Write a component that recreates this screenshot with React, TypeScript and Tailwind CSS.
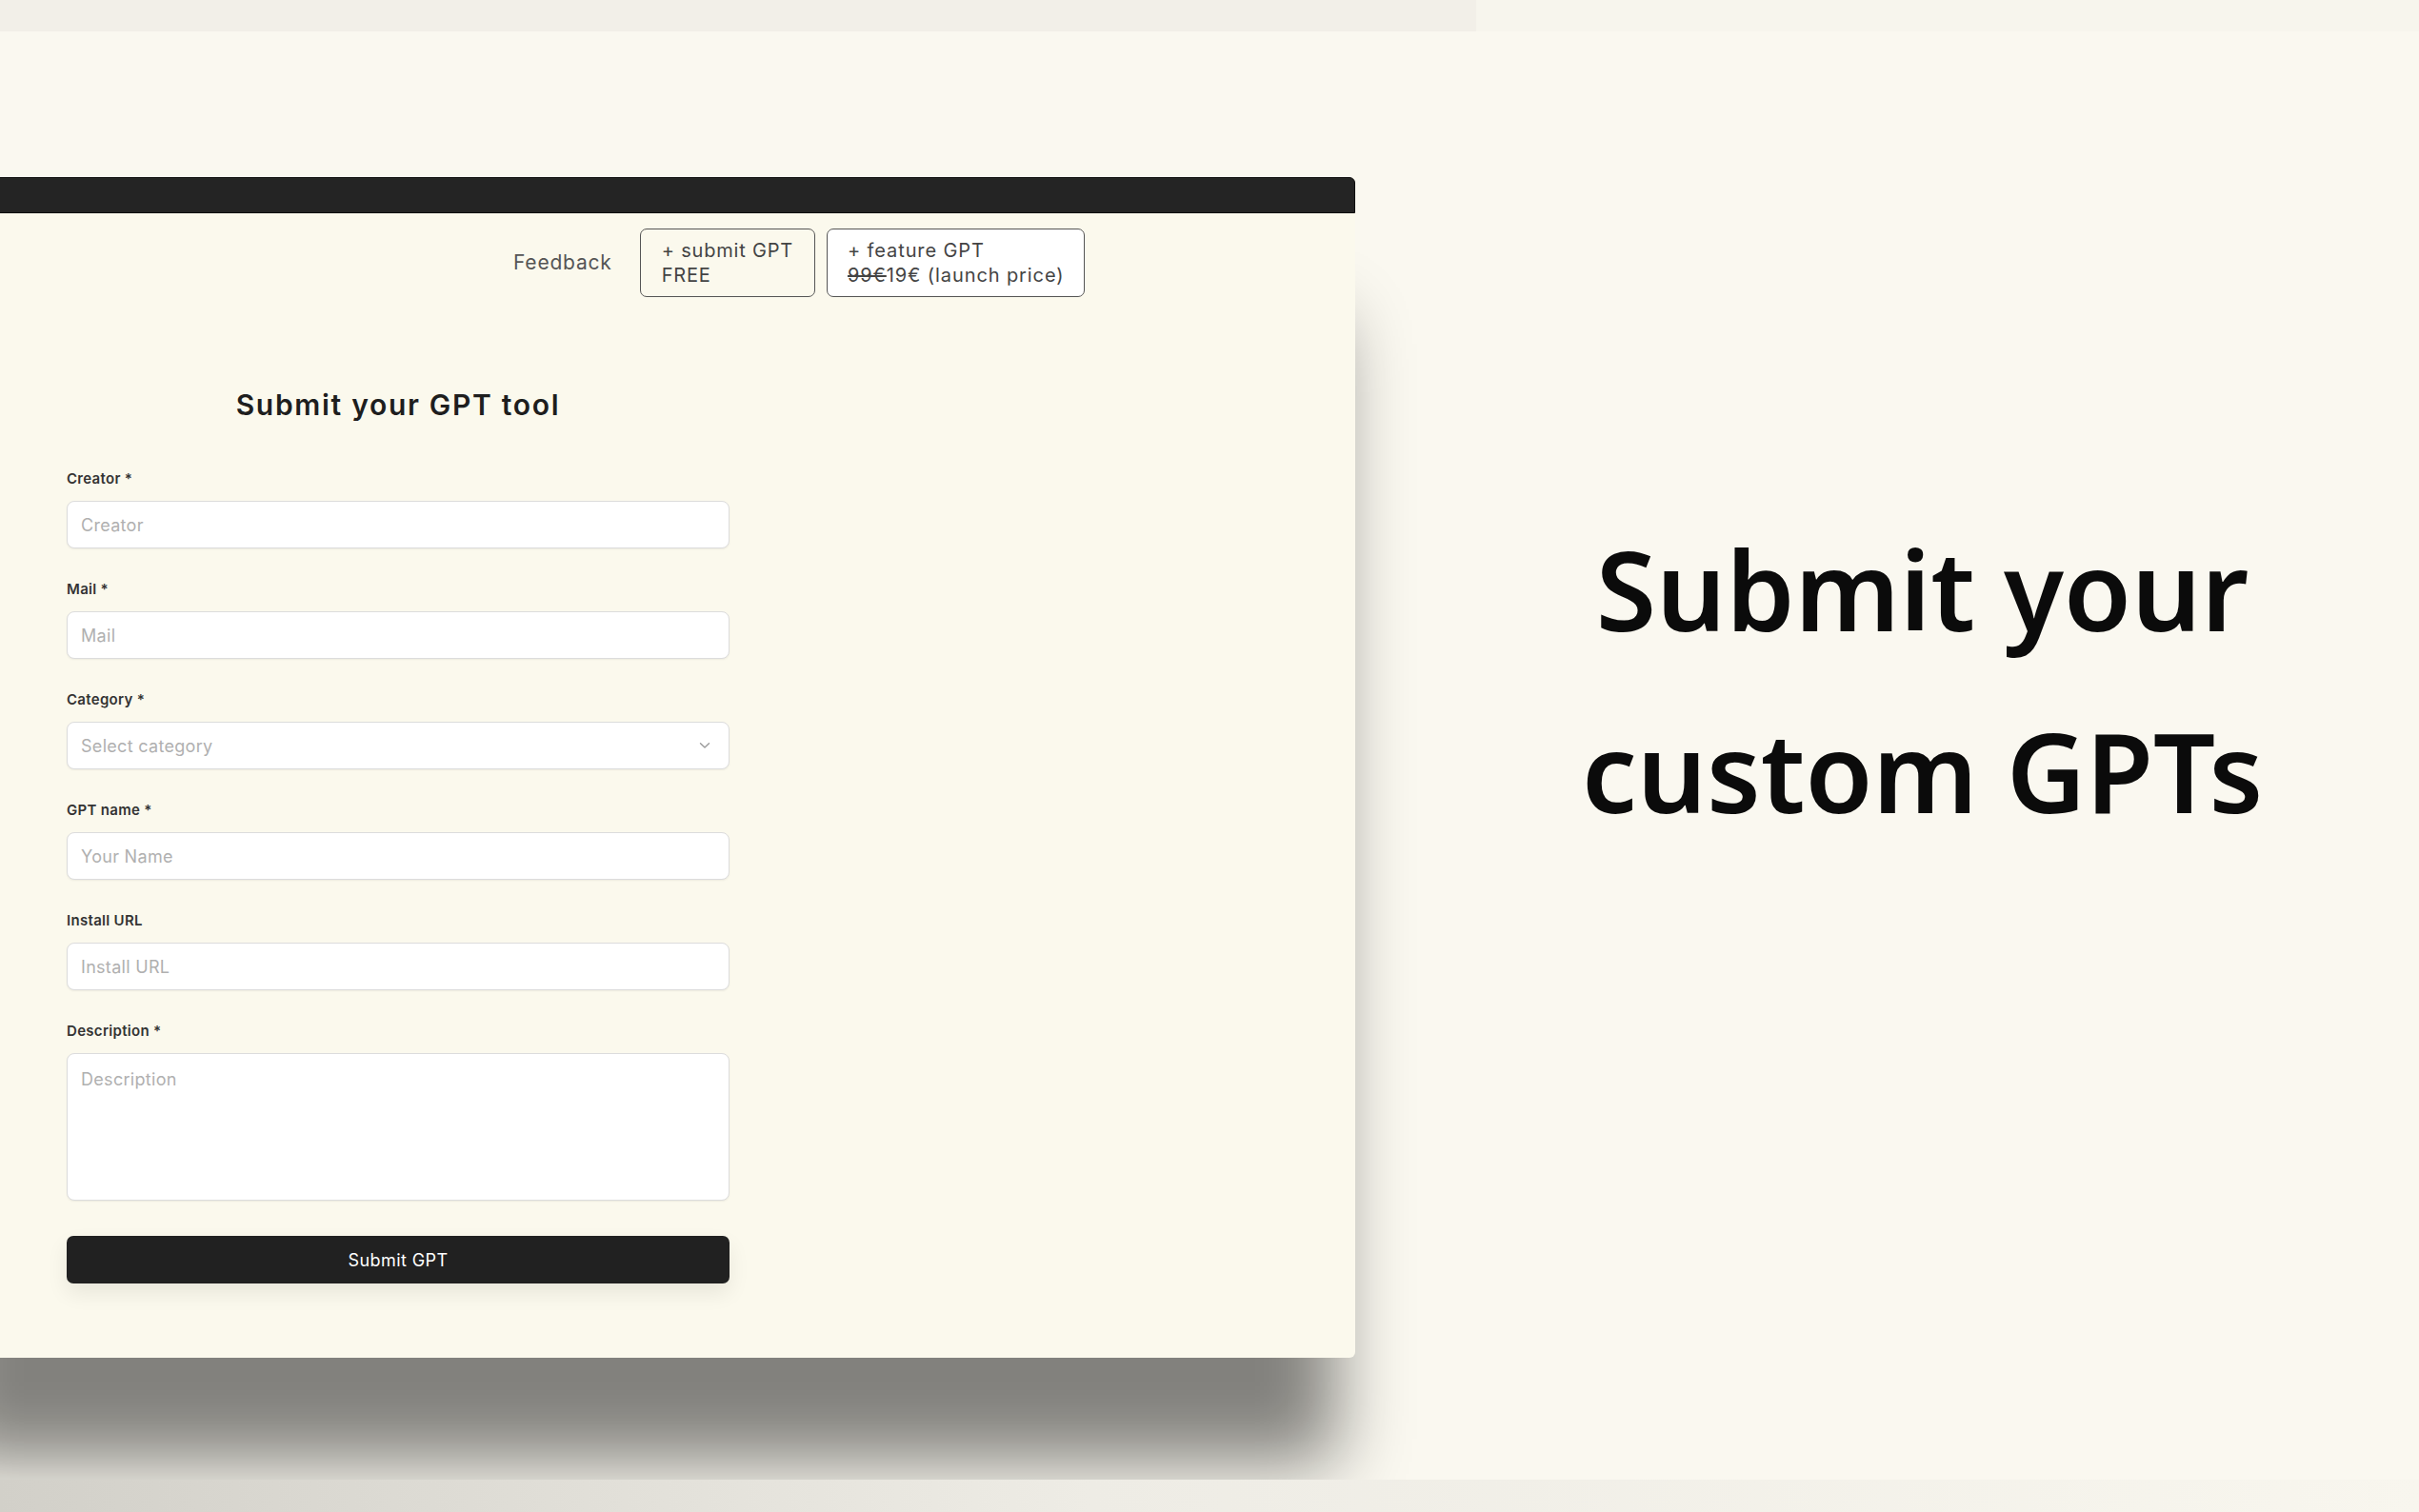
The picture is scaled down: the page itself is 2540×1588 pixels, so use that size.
import React from "react";

function Field({ label, children }: { label: string; children: React.ReactNode }) {
  return (
    <div className="flex flex-col">
      <label className="h-[20px] text-[15px] font-semibold leading-[20px] tracking-[0.3px] text-[#333333]">
        {label}
      </label>
      <div className="mt-[13px]">{children}</div>
    </div>
  );
}

const inputCls =
  "block h-[50px] w-full rounded-[8px] border border-[#dcdcdc] bg-white px-[14px] text-[18px] tracking-[0.3px] text-[#333] shadow-[0_1px_2px_rgba(0,0,0,0.06)] outline-none placeholder:text-[#b0b0b0]";

export default function App() {
  return (
    <div className="flex h-[1588px] w-[2540px] flex-col overflow-hidden bg-[#faf8f0] font-[Inter,'Liberation_Sans',sans-serif]">
      {/* top strip */}
      <div className="flex h-[33px] shrink-0">
        <div className="w-[1550px] bg-[#f2efe8]" />
        <div className="flex-1 bg-[#f7f5ed]" />
      </div>

      {/* middle */}
      <div className="flex h-[1521px] shrink-0 overflow-hidden">
        {/* browser window (extends past the left edge of the screen) */}
        <div className="-ml-[80px] mt-[153px] flex h-[1240px] w-[1503px] shrink-0 flex-col rounded-r-[6px] bg-[#fbf9ed] shadow-[0_130px_70px_-20px_rgba(0,0,0,0.48)]">
          <div className="h-[38px] shrink-0 rounded-tr-[6px] border border-[#0e0e0e] bg-[#242424]" />
          <div className="flex flex-col pl-[80px]">
            {/* nav */}
            <div className="flex items-center pl-[539px] pt-[16px]">
              <span className="mr-[29px] text-[21px] tracking-[0.8px] text-[#555555]">Feedback</span>
              <button className="mr-[12px] flex flex-col items-start rounded-[7px] border border-[#555555] px-[22px] py-[9px] text-left text-[20px] leading-[26px] tracking-[0.8px] text-[#444444]">
                <span>+ submit GPT</span>
                <span>FREE</span>
              </button>
              <button className="flex flex-col items-start rounded-[7px] border border-[#555555] bg-white px-[21px] py-[9px] text-left text-[20px] leading-[26px] tracking-[0.9px] text-[#444444]">
                <span>+ feature GPT</span>
                <span>
                  <span className="line-through">99€</span>19€ (launch price)
                </span>
              </button>
            </div>

            {/* form */}
            <div className="ml-[70px] flex w-[696px] flex-col">
              <h1 className="mt-[95px] text-center text-[30px] font-semibold leading-[36px] tracking-[1.7px] text-[#1e1e1e]">
                Submit your GPT tool
              </h1>
              <div className="mt-[50px] flex flex-col gap-[33px]">
                <Field label="Creator *">
                  <input className={inputCls} placeholder="Creator" />
                </Field>
                <Field label="Mail *">
                  <input className={inputCls} placeholder="Mail" />
                </Field>
                <Field label="Category *">
                  <div className="flex h-[50px] w-full items-center justify-between rounded-[8px] border border-[#dcdcdc] bg-white pl-[14px] pr-[19px] text-[18px] tracking-[0.3px] text-[#b0b0b0] shadow-[0_1px_2px_rgba(0,0,0,0.06)]">
                    <span>Select category</span>
                    <svg width="12" height="8" viewBox="0 0 12 8" fill="none">
                      <path d="M1.5 1.8 L6 6 L10.5 1.8" stroke="#9a9a9a" strokeWidth="1.4" strokeLinecap="round" strokeLinejoin="round" />
                    </svg>
                  </div>
                </Field>
                <Field label="GPT name *">
                  <input className={inputCls} placeholder="Your Name" />
                </Field>
                <Field label="Install URL">
                  <input className={inputCls} placeholder="Install URL" />
                </Field>
                <Field label="Description *">
                  <textarea
                    className="block h-[155px] w-full resize-none rounded-[8px] border border-[#dcdcdc] bg-white px-[14px] pt-[14px] text-[18px] leading-[26px] tracking-[0.3px] text-[#333] shadow-[0_1px_2px_rgba(0,0,0,0.06)] outline-none placeholder:text-[#b0b0b0]"
                    placeholder="Description"
                  />
                </Field>
              </div>
              <button className="mt-[37px] h-[50px] w-full rounded-[7px] bg-[#212121] text-[18px] tracking-[0.4px] text-white shadow-[0_10px_22px_rgba(0,0,0,0.08)]">
                Submit GPT
              </button>
            </div>
          </div>
        </div>

        {/* right headline */}
        <div className="flex-1 pl-[74px] pt-[490px] text-center font-['Noto_Sans',sans-serif] text-[115px] font-semibold leading-[191px] text-[#0b0b0b]">
          <div>Submit your</div>
          <div>custom GPTs</div>
        </div>
      </div>

      {/* bottom strip */}
      <div className="h-[34px] shrink-0 bg-linear-to-r from-[#d2d0c9] via-[#eeece5] via-45% to-[#f8f6ee]" />
    </div>
  );
}
